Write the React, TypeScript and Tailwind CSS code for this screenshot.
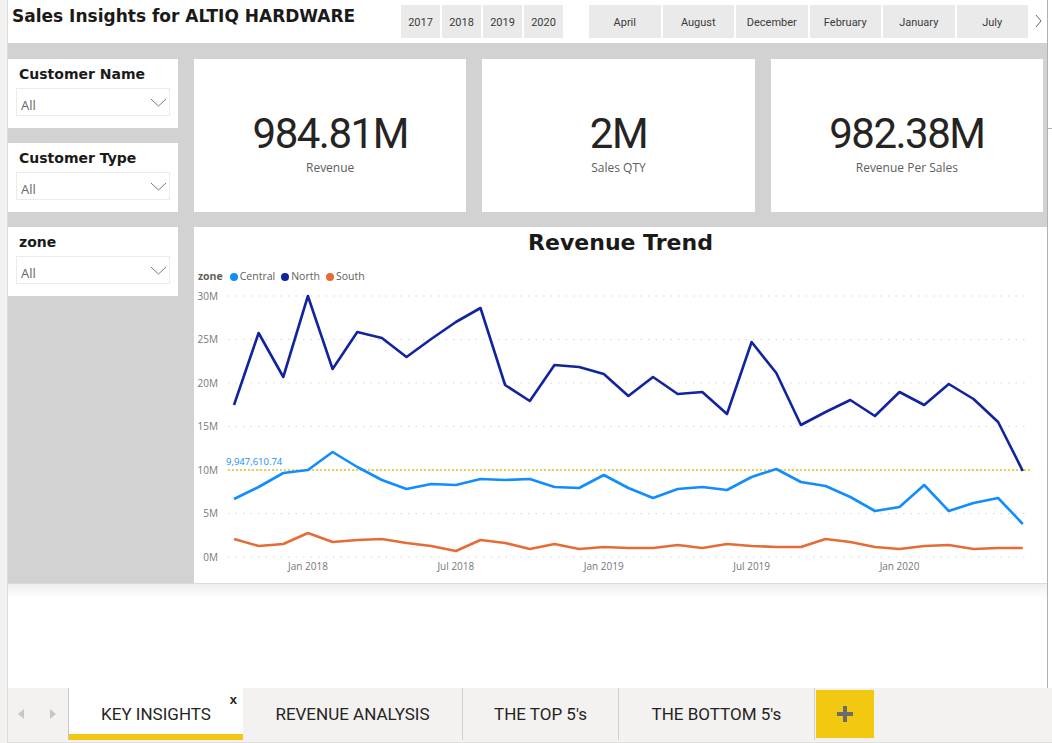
const north = [405, 333, 377, 296, 369, 332, 338, 357, 339, 322, 308, 385, 401, 365, 367, 374, 396, 377, 394, 392, 414, 342, 373, 425, 412, 400, 416, 392, 405, 384, 399, 422, 471];
const central = [499, 487, 473, 470, 452, 467, 480, 489, 484, 485, 479, 480, 479, 487, 488, 475, 488, 498, 489, 487, 490, 477, 469, 482, 486, 497, 511, 507, 485, 511, 503, 498, 524];
const south = [539, 546, 544, 533, 542, 540, 539, 543, 546, 551, 540, 543, 549, 544, 549, 547, 548, 548, 545, 548, 544, 546, 547, 547, 539, 542, 547, 549, 546, 545, 549, 548, 548];

const px = (i: number) => 234 + i * 24.65;
const pts = (arr: number[]) => arr.map((y, i) => `${px(i).toFixed(1)},${y}`).join(" ");

const years = ["2017", "2018", "2019", "2020"];
const months = ["April", "August", "December", "February", "January", "July"];
const yTicks = [
  { label: "30M", y: 296 },
  { label: "25M", y: 339.5 },
  { label: "20M", y: 383 },
  { label: "15M", y: 426.5 },
  { label: "10M", y: 470 },
  { label: "5M", y: 513.5 },
  { label: "0M", y: 557 },
];
const xTicks = [
  { label: "Jan 2018", i: 3 },
  { label: "Jul 2018", i: 9 },
  { label: "Jan 2019", i: 15 },
  { label: "Jul 2019", i: 21 },
  { label: "Jan 2020", i: 27 },
];

const heading = "font-['DejaVu_Sans',sans-serif] font-bold text-[#1b1a19]";

function Slicer({ title }: { title: string }) {
  return (
    <div className="h-[69px] bg-white px-[8px] pt-[7px]">
      <div className={`pl-[3px] text-[14px] leading-[16px] ${heading}`}>{title}</div>
      <div className="mt-[6px] h-[28px] border border-[#ebebeb] flex items-center justify-between pl-[4px] pr-[2px]">
        <span className="pt-[5px] text-[13px] leading-[16px] text-[#666666]">All</span>
        <svg width="17" height="9" viewBox="0 0 17 9">
          <polyline points="1,1 8.5,8 16,1" fill="none" stroke="#777" strokeWidth="1" />
        </svg>
      </div>
    </div>
  );
}

function Kpi({ value, label }: { value: string; label: string }) {
  return (
    <div className="flex-1 bg-white flex flex-col items-center pt-[53px]">
      <div className="font-['Roboto',sans-serif] text-[42px] leading-[44px] tracking-[-1.5px] text-[#252423]">{value}</div>
      <div className="mt-[4px] text-[12px] leading-[16px] text-[#605e5c]">{label}</div>
    </div>
  );
}

function Chart() {
  return (
    <div className="flex-1 bg-white flex flex-col">
      <div className={`pt-[3px] h-[29px] text-center text-[22px] leading-[26px] ${heading}`}>Revenue Trend</div>
      <div className="mt-[14px] h-[14px] flex items-center pl-[4px] text-[10.5px] text-[#605e5c]">
        <span className="font-bold">zone</span>
        <span className="ml-[7px] w-[8px] h-[8px] rounded-full bg-[#118dff]" />
        <span className="ml-[2px]">Central</span>
        <span className="ml-[6px] w-[8px] h-[8px] rounded-full bg-[#12239e]" />
        <span className="ml-[2px]">North</span>
        <span className="ml-[6px] w-[8px] h-[8px] rounded-full bg-[#e66c37]" />
        <span className="ml-[2px]">South</span>
      </div>
      <svg width="853" height="299" viewBox="194 284 853 299" className="block">
        {yTicks.map((t) => (
          <g key={t.label}>
            <line x1="228" x2="1030" y1={t.y} y2={t.y} stroke="#d6d6d6" strokeWidth="1" strokeDasharray="1.5 6" />
            <text x="218" y={t.y + 3.5} textAnchor="end" fontSize="10" fill="#777" fontFamily="Open Sans, sans-serif">{t.label}</text>
          </g>
        ))}
        {xTicks.map((t) => (
          <text key={t.label} x={px(t.i)} y="570" textAnchor="middle" fontSize="10" fill="#777" fontFamily="Open Sans, sans-serif">{t.label}</text>
        ))}
        <line x1="228" x2="1030" y1="470" y2="470" stroke="#e8cf4f" strokeWidth="2" strokeDasharray="2 2" />
        <text x="226" y="464.5" fontSize="9.5" fill="#118dff" fontFamily="Open Sans, sans-serif">9,947,610.74</text>
        <polyline points={pts(south)} fill="none" stroke="#e66c37" strokeWidth="2.6" strokeLinejoin="round" />
        <polyline points={pts(central)} fill="none" stroke="#118dff" strokeWidth="2.6" strokeLinejoin="round" />
        <polyline points={pts(north)} fill="none" stroke="#12239e" strokeWidth="2.6" strokeLinejoin="round" />
      </svg>
    </div>
  );
}

function Tab({ label, width }: { label: string; width: string }) {
  return (
    <div className={`${width} h-[52px] pt-[2px] border-r border-[#d2d0ce] flex items-center justify-center text-[17px] text-[#252423] font-['Roboto',sans-serif]`}>
      {label}
    </div>
  );
}

export default function App() {
  return (
    <div className="w-[1052px] h-[743px] flex bg-white overflow-hidden font-['Open_Sans',sans-serif]">
      <div className="w-[8px] h-full bg-[#f3f2f1] border-r border-[#dcdcdc]" />
      <div className="w-[1044px] flex flex-col">
        <div className="h-[688px] flex">
          <div className="w-[1039px] flex flex-col">
            {/* header */}
            <div className="h-[43px] flex items-start">
              <div className={`w-[393px] pl-[4px] pt-[6px] text-[17px] leading-[20px] ${heading}`}>Sales Insights for ALTIQ HARDWARE</div>
              <div className="mt-[5px] flex gap-[2px]">
                {years.map((y) => (
                  <div key={y} className="w-[39px] h-[33px] pt-[3px] bg-[#eaeaea] flex items-center justify-center text-[11px] text-[#3b3a39] font-['Roboto',sans-serif]">{y}</div>
                ))}
              </div>
              <div className="ml-[26px] mt-[5px] flex gap-[2px]">
                {months.map((m) => (
                  <div key={m} className="w-[71.5px] h-[33px] pt-[3px] bg-[#eaeaea] flex items-center justify-center text-[11px] text-[#3b3a39] font-['Roboto',sans-serif]">{m}</div>
                ))}
              </div>
              <svg className="ml-[7px] mt-[14px]" width="7" height="14" viewBox="0 0 7 14">
                <polyline points="1,1 6,7 1,13" fill="none" stroke="#666" strokeWidth="1" />
              </svg>
            </div>

            {/* canvas */}
            <div className="h-[540px] bg-[#d2d2d2] flex gap-[16px] pt-[16px]">
              <div className="w-[170px] flex flex-col gap-[15px]">
                <Slicer title="Customer Name" />
                <Slicer title="Customer Type" />
                <Slicer title="zone" />
              </div>
              <div className="flex-1 flex flex-col gap-[15px]">
                <div className="h-[153px] flex gap-[16px] pr-[4px]">
                  <Kpi value="984.81M" label="Revenue" />
                  <Kpi value="2M" label="Sales QTY" />
                  <Kpi value="982.38M" label="Revenue Per Sales" />
                </div>
                <Chart />
              </div>
            </div>

            <div className="h-[105px] bg-white">
              <div className="h-[1px] bg-[#dadada]" />
              <div className="h-[14px] bg-gradient-to-b from-[#efefef] to-white" />
            </div>
          </div>
          <div className="w-[1px] bg-[#b3b0ad]" />
          <div className="w-[4px] pt-[128px]">
            <div className="h-[1px] w-[4px] bg-[#b3b0ad]" />
          </div>
        </div>

        {/* page tabs */}
        <div className="h-[55px] bg-[#f3f2f1] border-b border-[#e1dfdd] flex items-start">
          <div className="w-[60px] h-[52px] flex items-center pl-[10px] gap-[26px]">
            <svg width="6" height="10" viewBox="0 0 6 10"><polygon points="6,0 0,5 6,10" fill="#c8c6c4" /></svg>
            <svg width="6" height="10" viewBox="0 0 6 10"><polygon points="0,0 6,5 0,10" fill="#c8c6c4" /></svg>
          </div>
          <div className="relative w-[175px] h-[52px] bg-white border-l border-[#c8c6c4] flex flex-col">
            <div className="h-[46px] pt-[8px] flex items-center justify-center text-[17px] text-[#252423] font-['Roboto',sans-serif]">KEY INSIGHTS</div>
            <div className="h-[6px] bg-[#f2c811]" />
            <span className="absolute right-[6px] top-[5px] text-[13px] leading-[14px] font-bold text-[#252423] font-['Liberation_Sans',sans-serif]">x</span>
          </div>
          <Tab label="REVENUE ANALYSIS" width="w-[220px]" />
          <Tab label="THE TOP 5's" width="w-[156px]" />
          <Tab label="THE BOTTOM 5's" width="w-[196px]" />
          <div className="mt-[2px] ml-[1px] w-[58px] h-[48px] bg-[#f2c811] flex items-center justify-center">
            <svg width="16" height="16" viewBox="0 0 16 16">
              <rect x="0" y="6" width="16" height="4" fill="#6b6b6b" />
              <rect x="6" y="0" width="4" height="16" fill="#6b6b6b" />
            </svg>
          </div>
        </div>
      </div>
    </div>
  );
}
